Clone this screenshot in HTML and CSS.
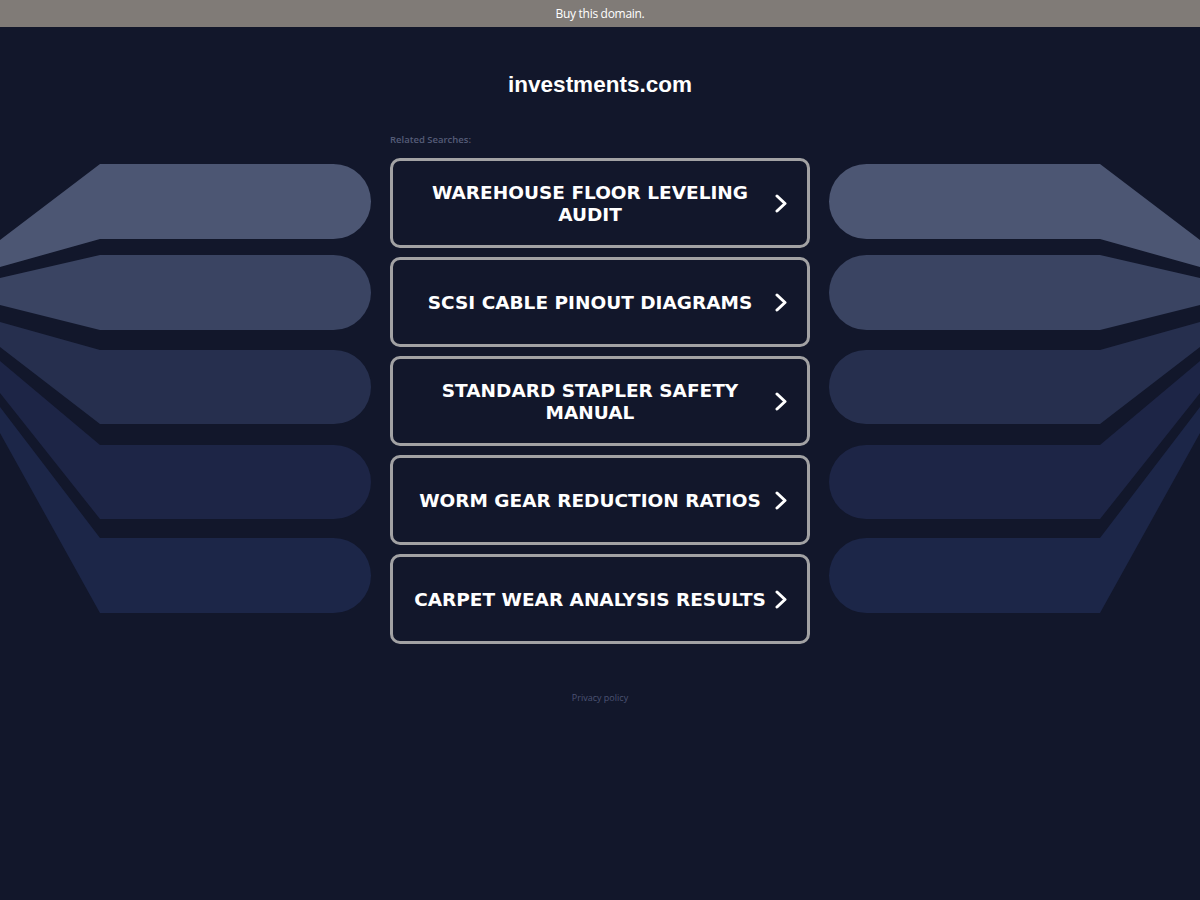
FILE: index.html
```html
<!DOCTYPE html>
<html>
  <head>
    <title>investments.com</title>
    <link rel="stylesheet" href="styles.css">
  </head>
  <body>
    <div class="topbar"><a href="#">Buy this domain.</a></div>

    <header class="site-header">
      <h1>investments.com</h1>
    </header>

    <main class="stage">
      <svg class="fan" viewBox="0 0 371 470" width="371" height="470">
        <path fill="#4c5673" d="M0,90 L100,14 L333.5,14 A37.5,37.5 0 0 1 333.5,89 L100,89 L0,117 Z" />
        <path fill="#3a4462" d="M0,128 L100,105 L333.5,105 A37.5,37.5 0 0 1 333.5,180 L100,180 L0,155 Z" />
        <path fill="#262f4e" d="M0,172 L100,200 L334,200 A37,37 0 0 1 334,274 L100,274 L0,197 Z" />
        <path fill="#1d2546" d="M0,211 L100,295 L334,295 A37,37 0 0 1 334,369 L100,369 L0,243 Z" />
        <path fill="#1c2648" d="M0,257 L100,388 L333.5,388 A37.5,37.5 0 0 1 333.5,463 L100,463 L0,283 Z" />
      </svg>

      <div class="links">
        <p class="label">Related Searches:</p>
        <a class="result" href="#">
          <span class="result-text">WAREHOUSE FLOOR LEVELING AUDIT</span>
          <svg class="chevron" viewBox="0 0 12 19" width="12" height="19"><polyline points="2,2 10,9.5 2,17" /></svg>
        </a>
        <a class="result" href="#">
          <span class="result-text">SCSI CABLE PINOUT DIAGRAMS</span>
          <svg class="chevron" viewBox="0 0 12 19" width="12" height="19"><polyline points="2,2 10,9.5 2,17" /></svg>
        </a>
        <a class="result" href="#">
          <span class="result-text">STANDARD STAPLER SAFETY MANUAL</span>
          <svg class="chevron" viewBox="0 0 12 19" width="12" height="19"><polyline points="2,2 10,9.5 2,17" /></svg>
        </a>
        <a class="result" href="#">
          <span class="result-text">WORM GEAR REDUCTION RATIOS</span>
          <svg class="chevron" viewBox="0 0 12 19" width="12" height="19"><polyline points="2,2 10,9.5 2,17" /></svg>
        </a>
        <a class="result" href="#">
          <span class="result-text">CARPET WEAR ANALYSIS RESULTS</span>
          <svg class="chevron" viewBox="0 0 12 19" width="12" height="19"><polyline points="2,2 10,9.5 2,17" /></svg>
        </a>
      </div>

      <svg class="fan fan-right" viewBox="0 0 371 470" width="371" height="470">
        <path fill="#4c5673" d="M0,90 L100,14 L333.5,14 A37.5,37.5 0 0 1 333.5,89 L100,89 L0,117 Z" />
        <path fill="#3a4462" d="M0,128 L100,105 L333.5,105 A37.5,37.5 0 0 1 333.5,180 L100,180 L0,155 Z" />
        <path fill="#262f4e" d="M0,172 L100,200 L334,200 A37,37 0 0 1 334,274 L100,274 L0,197 Z" />
        <path fill="#1d2546" d="M0,211 L100,295 L334,295 A37,37 0 0 1 334,369 L100,369 L0,243 Z" />
        <path fill="#1c2648" d="M0,257 L100,388 L333.5,388 A37.5,37.5 0 0 1 333.5,463 L100,463 L0,283 Z" />
      </svg>
    </main>

    <footer class="site-footer">
      <a href="#">Privacy policy</a>
    </footer>
  </body>
</html>
```

FILE: styles.css
```css
body {
  background-color: #12172b;
  color: #ffffff;
  font-family: 'Open Sans', Arial, sans-serif;
  margin: 0;
  overflow: hidden;
}

a {
  text-decoration: none;
}

.topbar {
  background-color: #807b77;
  height: 27px;
  display: flex;
  align-items: center;
  justify-content: center;
}

.topbar a {
  color: #ffffff;
  font-size: 12px;
  letter-spacing: -0.3px;
}

.site-header {
  padding: 43px 0 34px;
  text-align: center;
}

.site-header h1 {
  margin: 0;
  font-family: 'Liberation Sans', Arial, sans-serif;
  font-size: 22.5px;
  line-height: 30px;
  font-weight: bold;
  color: #ffffff;
}

.stage {
  display: flex;
  justify-content: center;
  align-items: flex-start;
  gap: 19px;
}

.fan {
  flex: none;
  margin-top: 16px;
  display: block;
}

.fan-right {
  transform: scaleX(-1);
}

.links {
  width: 420px;
  flex: none;
}

.label {
  margin: 0 0 12px;
  font-family: 'Open Sans', Arial, sans-serif;
  font-size: 9.5px;
  font-weight: 600;
  line-height: 12px;
  color: #555c78;
}

.result {
  box-sizing: border-box;
  height: 90px;
  margin-bottom: 9px;
  border: 3px solid #a2a2a4;
  border-radius: 10px;
  padding: 0 20px 0 18px;
  display: flex;
  align-items: center;
  gap: 6px;
  color: #ffffff;
}

.result-text {
  flex: 1;
  padding-top: 2px;
  text-align: center;
  font-family: 'DejaVu Sans', Verdana, sans-serif;
  font-weight: bold;
  font-size: 18.5px;
  line-height: 22px;
}

.chevron {
  flex: none;
  fill: none;
  stroke: #ffffff;
  stroke-width: 3;
  stroke-linecap: round;
  stroke-linejoin: round;
}

.site-footer {
  padding-top: 31px;
  text-align: center;
}

.site-footer a {
  font-size: 9px;
  line-height: 11px;
  color: #4c5373;
}
```
